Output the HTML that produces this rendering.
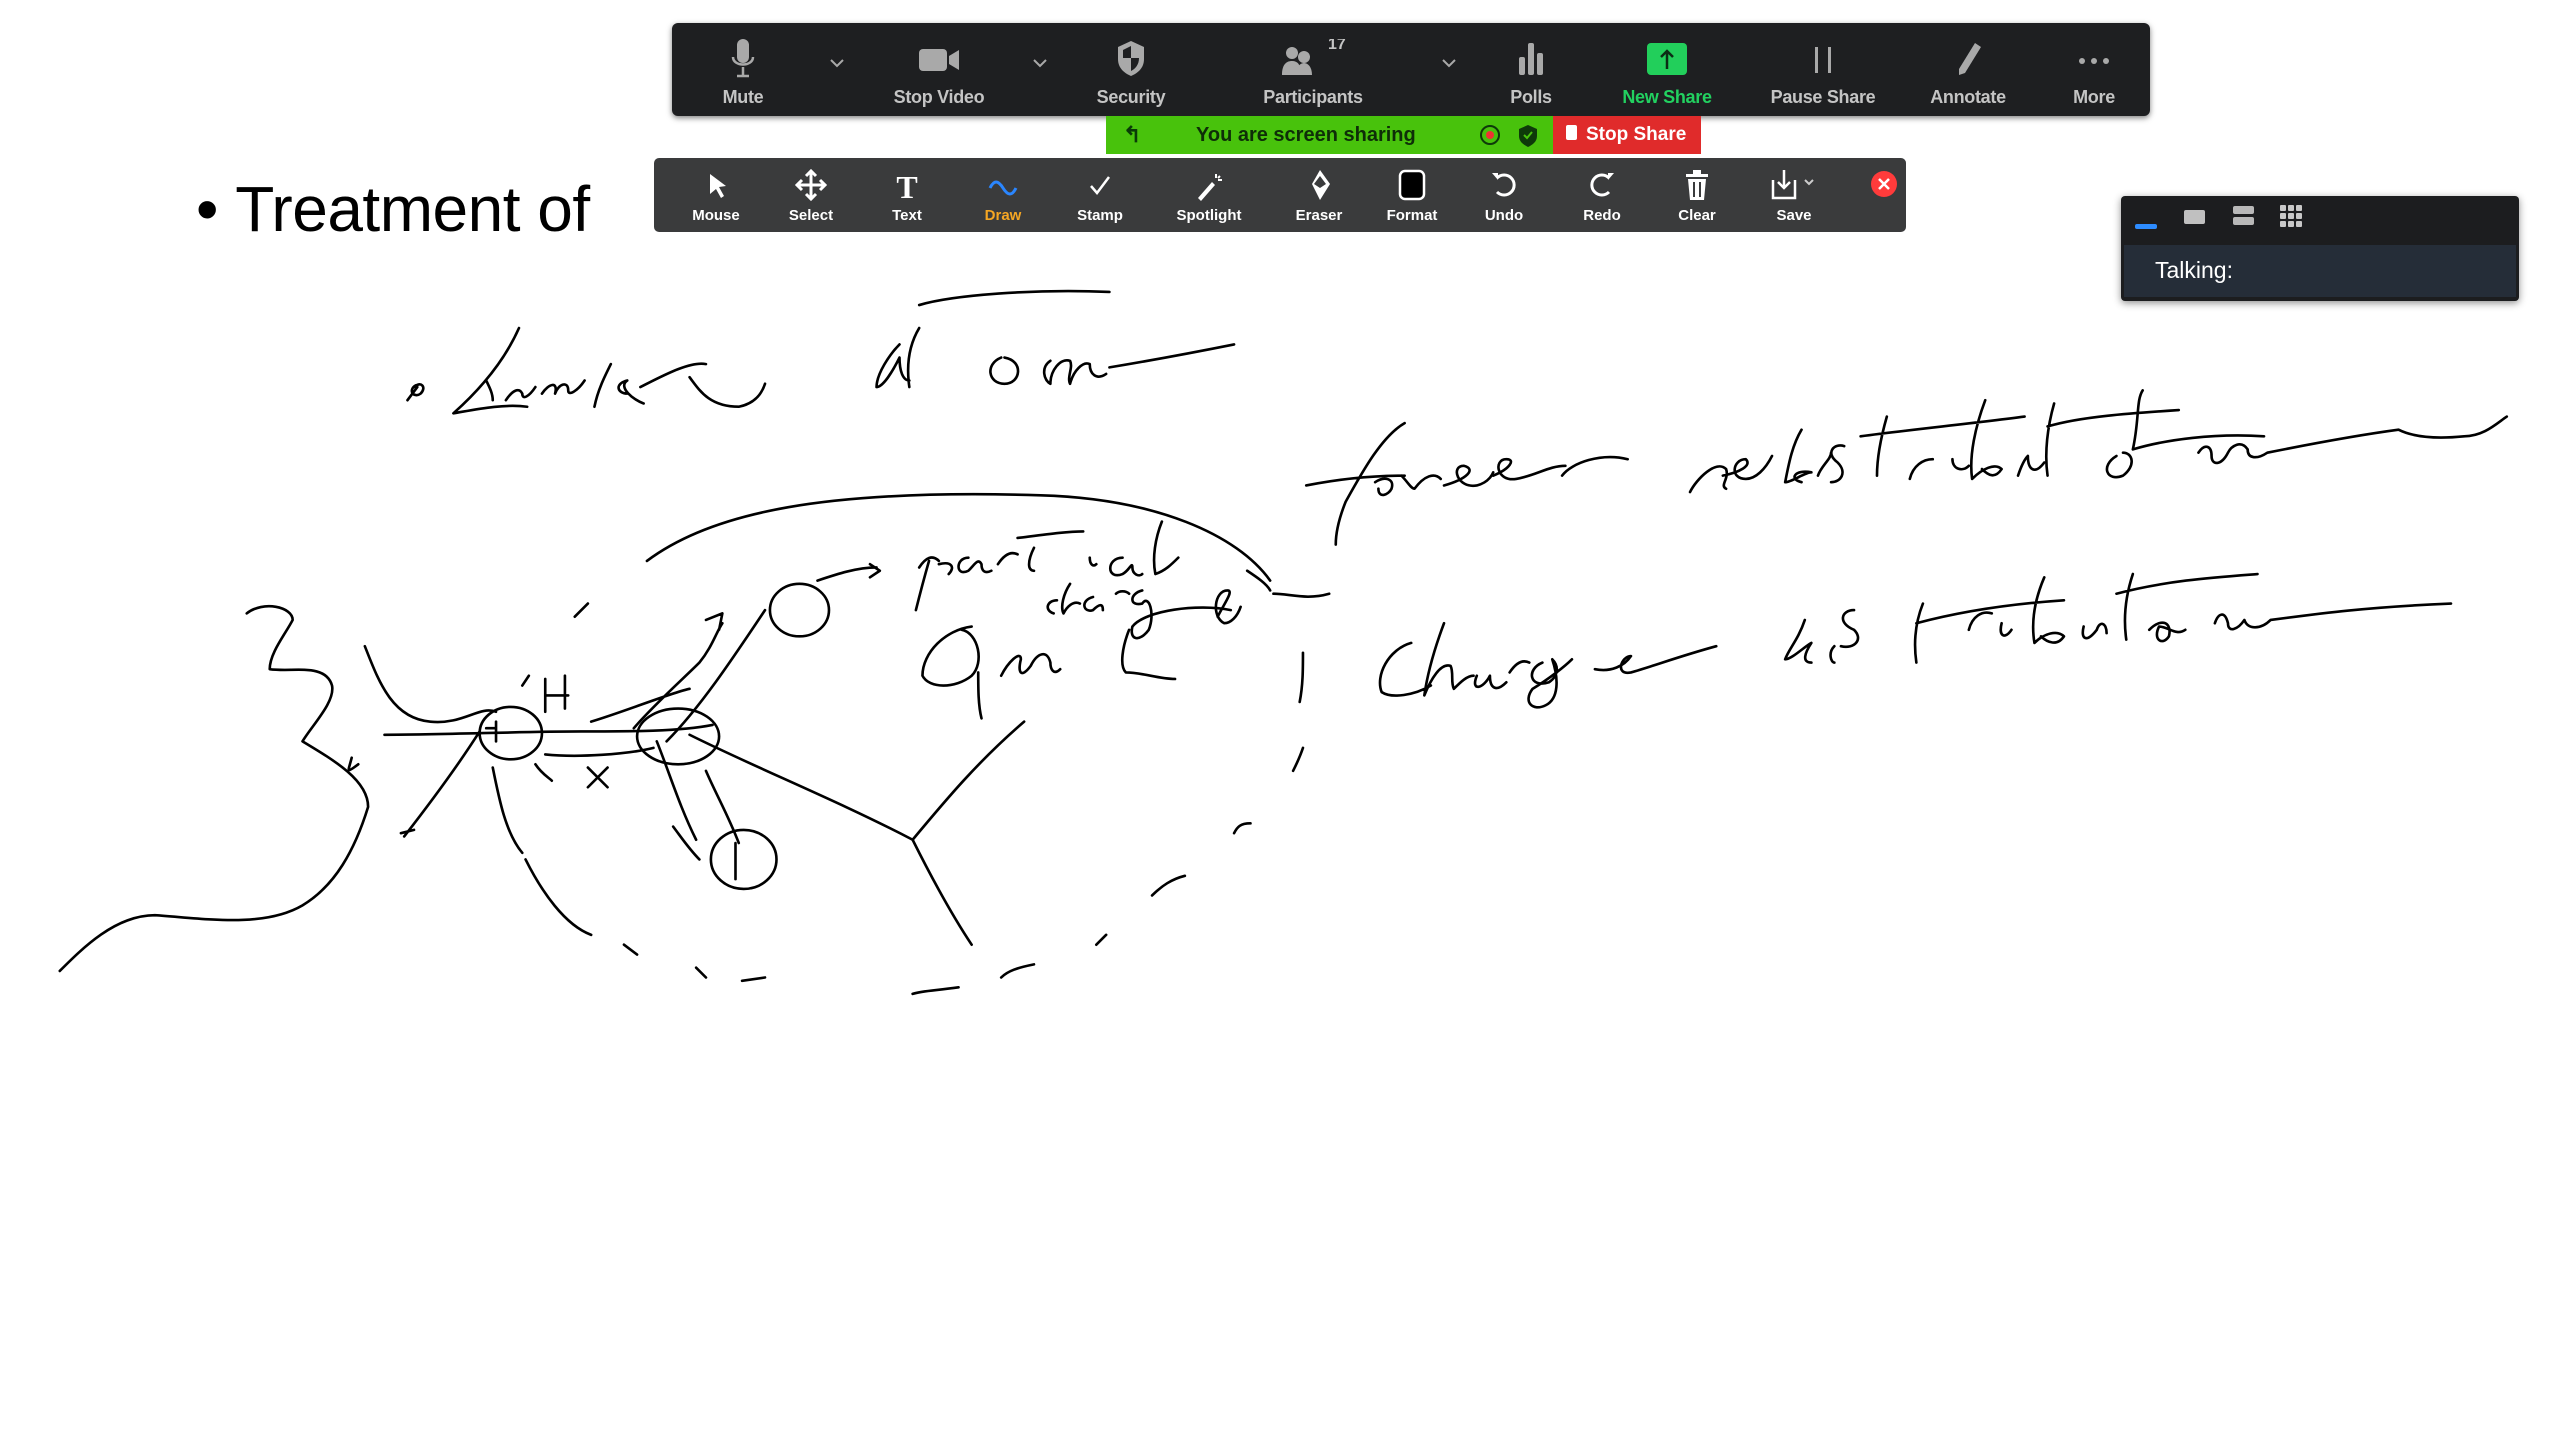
<!DOCTYPE html>
<html><head><meta charset="utf-8"><style>
html,body{margin:0;padding:0;width:2560px;height:1440px;overflow:hidden;background:#fff;font-family:"Liberation Sans",sans-serif;}
.abs{position:absolute}
#tb{left:672px;top:23px;width:1478px;height:93px;background:#1e1f21;border-radius:6px;box-shadow:0 2px 6px rgba(0,0,0,.5)}
.ti{position:absolute;top:0;height:93px;width:160px;margin-left:-80px;text-align:center}
.ti svg{position:absolute;left:50%;top:16px;transform:translateX(-50%)}
.ti span{position:absolute;left:0;right:0;top:64px;font-size:18px;font-weight:bold;color:#c4c4c4;letter-spacing:-0.3px}
.ab{position:absolute;top:0;height:74px;width:100px;margin-left:-50px;text-align:center}
.ab svg{position:absolute;left:50%;top:10px;transform:translateX(-50%)}
.ab span{position:absolute;left:0;right:0;top:49px;font-size:15px;font-weight:bold;color:#fff}
</style></head><body>
<div class="abs" style="left:196px;top:172px;font-size:64px;color:#000;white-space:nowrap;letter-spacing:-0.5px">•&nbsp;Treatment of</div>
<div class="abs" style="left:668px;top:172px;font-size:64px;color:#000;white-space:nowrap;letter-spacing:-0.5px">covalent bonds at the boundaries</div>

<svg class="abs" style="left:0;top:0" width="2560" height="1440" viewBox="0 0 1560 878" fill="none" stroke="#000" stroke-width="1.6" stroke-linecap="round" stroke-linejoin="round">
<path d="M252 236c4-4 8 0 4 4-4 3-8-2-3-5M248 244l6-8"/>
<path d="M316 200c-8 18-22 36-40 52 12-2 30-6 45-4M296 232c2 4 4 8 4 12M308 244c4-6 8-8 10-4 0 4 4 2 8-4M330 240c4-6 10-8 8 0 2-6 8-8 8-2 0 4 6 0 10-6M372 222c-4 8-8 16-10 26M382 240c-6 0-8-6 0-8-6 4 4 12 10 14M390 236c12-6 30-16 40-14M420 230c6 8 12 18 30 18 10-2 14-8 16-14"/>
<path d="M548 210c-6 6-14 18-14 26 4 0 10-10 14-18 0 8 2 14 6 14M560 200c-6 10-8 22-6 36M560 186c20-6 70-10 116-8M610 218c-10 4-8 16 2 16 10 0 12-14 0-16M640 220c-6 4-4 12 0 14 0-8 6-16 12-14 2 4-2 10 0 14 2-8 8-14 12-12 0 6 4 10 10 6M676 224c24-4 56-10 76-14"/>
<path d="M856 258c-14 8-26 30-36 48-4 10-6 18-6 26M796 296c20-4 40-6 60-6M838 294c6-4 12-2 10 4-2 4-8 6-8 0M854 290c4 4 6 8 8 8 6-8 12-10 16-6M880 296c14-4 20-10 12-12-8 0-4 14 8 12 8-2 10-8 10-8M910 290c10-4 14-10 8-10-8 0-6 14 6 12 12-2 20-8 30-8M952 290c6-8 24-14 40-10M1030 300c4-8 16-20 22-14 2 6-4 10 0 12M1050 290c10-2 18-6 14-10-8 0-10 12 0 12 6 0 12-6 16-14M1098 262c-6 10-8 22-10 32 4 0 12-6 16-6-10-2-14 4-6 6M1108 290c2-6 8-10 8-14M1124 272c-6-2-12 4-4 10 6 6 2 12-4 12M1150 254c-4 14-6 26-6 36M1134 266c30-4 70-8 100-12M1164 292c2-8 8-12 14-12M1190 280c0 6 6 8 10 4M1210 244c-6 16-10 34-8 48 6-6 14-10 18-6-4 6-8 4-12 0M1230 290c2-6 4-10 6-12 0 8 4 12 10 4M1252 246c-4 14-6 30-4 44M1248 260c20-6 50-8 80-10M1290 278c-10 6-6 16 4 12 8-6 6-14 0-14M1340 276c4-6 8-4 8 2 0 6 6 6 10-2 2-4 8-8 12-2 0 6 6 6 12 2 20-4 50-10 80-14 8 4 20 6 40 4 12 0 20-8 26-12"/>
<path d="M1300 274c4-18 2-30 6-36M1300 274c20-6 50-10 80-8"/>
<path d="M860 392c-14 4-22 20-18 30 6 4 20 2 30-4M880 380c-6 16-10 30-12 44 4-10 10-20 16-18 2 4 0 10 2 14 4-4 8-8 12-8M900 412c-4 10 4 8 8 0 0 8 4 10 10 4M920 410c4-6 8-8 12-6M940 404c-10 4-8 16 4 12 6-4 6-10 2-14 4 12 4 24-4 28-8 4-14-2-8-10 10-6 20-14 24-18M972 408c10 2 18-2 22-8-6 0-10 12 0 10 14-4 30-10 52-16M1100 378c-4 12-10 18-12 24 4 0 12-8 16-10-4 6-6 12 0 12M1118 394c-4 4-2 10 0 10M1130 372c-8 0-10 8 0 12 6 6 0 12-8 10M1172 368c-4 10-6 22-4 36M1168 380c30-8 60-12 90-14M1200 384c2-8 8-12 14-10M1220 380c-2 8 2 10 6 4M1246 352c-6 14-8 28-6 40 6-6 14-8 18-4-4 6-10 4-14 0M1270 382c-2 8 2 10 8 2 2-6 6-4 6 2M1300 350c-4 12-6 26-4 40M1290 362c30-8 60-10 86-12M1310 384c8-8 14-4 12 4-4 6-10 2-6-6 6 0 10 6 16 2M1350 380c2-6 6-8 8 0 0 6 6 4 10-2 2 6 10 6 16 0 30-4 60-8 110-10"/>
<path d="M150 374c10-8 28-4 28 4-4 8-14 20-14 30 14 2 34-4 38 10 2 10-12 24-18 34 20 12 40 24 40 40-8 26-20 48-40 60-24 14-60 8-90 6-24 0-44 20-58 34M214 462c-2 8-4 10 4 4"/>
<path d="M222 394c8 20 16 44 40 46 20 2 30-10 40-6"/>
<path d="M234 448c40 0 80-2 120-2 30 0 60 0 80-4"/>
<ellipse cx="311" cy="447" rx="19" ry="16"/>
<path d="M302 440l0 12M296 444l6 0"/>
<path d="M332 414v20M344 412v20M332 424h14"/>
<ellipse cx="413" cy="449" rx="25" ry="17"/>
<path d="M386 444c12-14 30-30 40-40 8-10 10-18 14-24M430 378l10-4-2 10M292 446c-14 22-32 46-46 64M244 508l8-2M326 466c4 6 8 8 10 10M358 468l12 12M370 468l-12 12M332 460c20 2 50 0 66-4M360 440c20-6 50-18 60-20"/>
<ellipse cx="487" cy="372" rx="18" ry="16"/>
<path d="M466 372c-20 30-40 60-60 80M498 354c12-4 24-8 36-8M530 344l6 4-6 4"/>
<path d="M400 452c8 20 14 40 24 60M410 504c6 8 10 14 16 20M430 470c6 14 14 28 20 44"/>
<ellipse cx="453" cy="524" rx="20" ry="18"/>
<path d="M448 514v22"/>
<path d="M420 448c40 20 90 40 136 64 20-24 40-48 68-72M556 512c10 20 24 46 36 64"/>
<path d="M394 342c40-30 110-44 240-40 70 2 120 24 140 52M350 376l8-8M318 418l4-6M794 398c0 10 0 20-2 30M794 456c-2 6-4 10-6 14M752 508c2-4 4-6 10-6M702 546c6-6 12-10 20-12M668 576l6-6M610 596c4-4 10-6 20-8M556 606c6-2 14-2 28-4M452 598l14-2M424 590l6 6M380 576l8 6M320 524c10 20 24 40 40 46M300 468c4 20 8 40 18 52"/>
<path d="M560 346c4-6 8-8 12-4M566 342c-4 14-6 22-8 30M572 344c8-2 10 2 6 6M590 340c-8 0-8 12 0 8 4-4 6-8 8-4 0 4 2 6 6 4M608 344c4-6 8-8 12-6M630 334c-4 8-4 14 0 14M620 328c16-2 30-4 40-4M664 340c0 4 2 6 4 4M684 340c-10 0-10 14 0 10 4-2 6-8 6-4 0 4 4 6 6 4M708 318c-4 10-6 22-4 32 6-2 10-6 14-10"/>
<path d="M644 366c-6 0-8 6-2 8M652 356c-4 6-6 14-4 18 2-4 6-8 10-6M666 364c-8 2-6 10 0 8 4-4 6-4 6 0M680 362c2-2 6-2 8 0M696 360c-8 2-8 10 0 8 4-6 8 6 4 16-6 8-12 6-10-2 8-10 40-14 60-10M760 348c6 4 12 8 14 12M776 362c10 0 20 4 34 0"/>
<path d="M592 382c-16 2-30 16-30 30 4 8 20 8 30 0 8-8 4-26-6-28M596 410c0 10 0 20 2 28M610 412c4-8 12-16 12-10-2 8 0 12 6 4 4-8 10-10 12-2 0 4 2 8 6 4M688 384c-4 10-6 22-2 26 10 0 20 4 30 4"/>
<path d="M742 376c4-8 10-16 6-16-8 0-10 16-2 20 4 0 8-4 10-10"/>
</svg>

<div id="tb" class="abs">
  <div class="ti" style="left:71px"><svg width="24" height="40" viewBox="0 0 24 40"><rect x="6" y="0" width="12" height="24" rx="6" fill="#a9a9a9"/><path d="M2 18c0 10 20 10 20 0M12 28v8M6 37h12" stroke="#a9a9a9" stroke-width="2.5" fill="none"/></svg><span>Mute</span></div>
  <div class="ti" style="left:165px"><svg width="20" height="40"><path d="M4 21l6 6 6-6" stroke="#a9a9a9" stroke-width="2" fill="none"/></svg></div>
  <div class="ti" style="left:267px"><svg width="44" height="40"><rect x="2" y="10" width="28" height="22" rx="4" fill="#a9a9a9"/><path d="M32 17l10-6v20l-10-6z" fill="#a9a9a9"/></svg><span>Stop Video</span></div>
  <div class="ti" style="left:368px"><svg width="20" height="40"><path d="M4 21l6 6 6-6" stroke="#a9a9a9" stroke-width="2" fill="none"/></svg></div>
  <div class="ti" style="left:459px"><svg width="32" height="40"><path d="M16 2l13 6v12c0 9-6 14-13 17C9 34 3 29 3 20V8z" fill="#a9a9a9"/><path d="M16 7v12H8V11zM16 19h8c0 7-4 11-8 13z" fill="#1e1f21"/></svg><span>Security</span></div>
  <div class="ti" style="left:641px"><svg width="70" height="40"><circle cx="14" cy="14" r="6" fill="#a9a9a9"/><circle cx="26" cy="18" r="6" fill="#a9a9a9"/><path d="M4 36c0-10 4-14 10-14s8 4 8 8v6z M18 36c0-8 4-12 8-12s8 4 8 12z" fill="#a9a9a9"/><text x="50" y="10" font-size="16" font-weight="bold" fill="#c4c4c4" font-family="Liberation Sans">17</text></svg><span>Participants</span></div>
  <div class="ti" style="left:777px"><svg width="20" height="40"><path d="M4 21l6 6 6-6" stroke="#a9a9a9" stroke-width="2" fill="none"/></svg></div>
  <div class="ti" style="left:859px"><svg width="32" height="40"><rect x="4" y="18" width="6" height="18" rx="2" fill="#a9a9a9"/><rect x="13" y="4" width="6" height="32" rx="2" fill="#a9a9a9"/><rect x="22" y="14" width="6" height="22" rx="2" fill="#a9a9a9"/></svg><span>Polls</span></div>
  <div class="ti" style="left:995px"><svg width="44" height="40"><rect x="2" y="4" width="40" height="32" rx="4" fill="#22cf5b"/><path d="M22 30V12M16 18l6-6 6 6" stroke="#0b2d15" stroke-width="2.5" fill="none"/></svg><span style="color:#22d160">New Share</span></div>
  <div class="ti" style="left:1151px"><svg width="30" height="40"><rect x="7" y="8" width="3" height="26" fill="#a9a9a9"/><rect x="20" y="8" width="3" height="26" fill="#a9a9a9"/></svg><span>Pause Share</span></div>
  <div class="ti" style="left:1296px"><svg width="34" height="40"><path d="M24 4l6 4-16 26-6 2 0-6z" fill="#a9a9a9"/></svg><span>Annotate</span></div>
  <div class="ti" style="left:1422px"><svg width="40" height="40"><circle cx="8" cy="22" r="3" fill="#a9a9a9"/><circle cx="20" cy="22" r="3" fill="#a9a9a9"/><circle cx="32" cy="22" r="3" fill="#a9a9a9"/></svg><span>More</span></div>
</div>

<div class="abs" style="left:1106px;top:116px;width:447px;height:38px;background:#48c20c"></div>
<div class="abs" style="left:1123px;top:122px;font-size:22px;color:#0a3a08;font-weight:bold">↰</div>
<div class="abs" style="left:1196px;top:124px;font-size:20px;color:#0e2e08;font-weight:bold">You are screen sharing</div>
<svg class="abs" style="left:1476px;top:122px" width="70" height="26"><circle cx="14" cy="13" r="9" stroke="#0e3a0a" stroke-width="2" fill="none"/><circle cx="14" cy="13" r="4" fill="#e33"/><path d="M52 3l9 4v7c0 6-5 9-9 11-4-2-9-5-9-11V7z" fill="#0e3a0a"/><path d="M48 13l3 3 5-6" stroke="#48c20c" stroke-width="2" fill="none"/></svg>
<div class="abs" style="left:1553px;top:116px;width:148px;height:38px;background:#e02b2b"></div>
<div class="abs" style="left:1566px;top:125px;width:11px;height:15px;background:#fff;border-radius:2px"></div>
<div class="abs" style="left:1586px;top:124px;font-size:19px;color:#fff;font-weight:bold">Stop Share</div>

<div class="abs" style="left:654px;top:158px;width:1252px;height:74px;background:#3a3b3c;border-radius:5px">
  <div class="ab" style="left:62px"><svg width="30" height="34"><path d="M9 6l16 12-7 1 5 9-3 2-5-9-6 5z" fill="#fff"/></svg><span>Mouse</span></div>
  <div class="ab" style="left:157px"><svg width="34" height="34"><path d="M17 3v28M3 17h28M12 8l5-5 5 5M12 26l5 5 5-5M8 12l-5 5 5 5M26 12l5 5-5 5" stroke="#fff" stroke-width="3" fill="none"/></svg><span>Select</span></div>
  <div class="ab" style="left:253px"><svg width="30" height="34"><text x="15" y="30" font-size="32" text-anchor="middle" fill="#fff" font-family="Liberation Serif" font-weight="bold">T</text></svg><span>Text</span></div>
  <div class="ab" style="left:349px"><svg width="34" height="34"><path d="M4 20c4-8 8-8 13 0s9 8 13 0" stroke="#2a86ff" stroke-width="3" fill="none"/></svg><span style="color:#f5a623">Draw</span></div>
  <div class="ab" style="left:446px"><svg width="30" height="34"><path d="M6 18l6 7 12-16" stroke="#fff" stroke-width="2.5" fill="none"/></svg><span>Stamp</span></div>
  <div class="ab" style="left:555px"><svg width="34" height="34"><path d="M6 30l14-16 3 3-14 16z" fill="#fff"/><path d="M24 6v4M30 12h-4M28 8l-2 2" stroke="#fff" stroke-width="2"/></svg><span>Spotlight</span></div>
  <div class="ab" style="left:665px"><svg width="30" height="34"><path d="M16 2l10 14-10 16-8-16z" fill="#fff"/><path d="M16 20l-6-4 6-8 6 8z" fill="#3a3b3c"/></svg><span>Eraser</span></div>
  <div class="ab" style="left:758px"><svg width="34" height="34"><rect x="5" y="3" width="24" height="28" rx="5" fill="#000" stroke="#fff" stroke-width="2.5"/></svg><span>Format</span></div>
  <div class="ab" style="left:850px"><svg width="34" height="34"><path d="M10 10a10 10 0 1 1 0 14" stroke="#fff" stroke-width="3" fill="none"/><path d="M5 5l6 0 0 7z" fill="#fff"/></svg><span>Undo</span></div>
  <div class="ab" style="left:948px"><svg width="34" height="34"><path d="M24 10a10 10 0 1 0 0 14" stroke="#fff" stroke-width="3" fill="none"/><path d="M29 5l-6 0 0 7z" fill="#fff"/></svg><span>Redo</span></div>
  <div class="ab" style="left:1043px"><svg width="30" height="34"><rect x="4" y="6" width="22" height="3" fill="#fff"/><rect x="11" y="2" width="8" height="4" fill="#fff"/><path d="M6 11h18l-2 21H8z" fill="#fff"/><path d="M12 14v15M18 14v15" stroke="#3a3b3c" stroke-width="2"/></svg><span>Clear</span></div>
  <div class="ab" style="left:1140px"><svg width="50" height="34"><path d="M4 12v18h22V12" stroke="#fff" stroke-width="2.5" fill="none"/><path d="M15 2v18M9 14l6 6 6-6" stroke="#fff" stroke-width="2.5" fill="none"/><path d="M36 12l4 4 4-4" stroke="#ccc" stroke-width="2" fill="none"/></svg><span>Save</span></div>
  <div class="ab" style="left:1230px"><svg width="30" height="34"><circle cx="15" cy="16" r="13" fill="#ff3b3b"/><path d="M10 11l10 10M20 11l-10 10" stroke="#fff" stroke-width="2.5"/></svg></div>
</div>

<div class="abs" style="left:2121px;top:196px;width:398px;height:105px;background:#1c1d1f;border-radius:4px;box-shadow:0 2px 8px rgba(0,0,0,.45);overflow:hidden">
  <div class="abs" style="left:14px;top:28px;width:22px;height:5px;background:#2d8cff;border-radius:2px"></div>
  <div class="abs" style="left:63px;top:14px;width:21px;height:14px;background:#c0c0c0;border-radius:2px"></div>
  <div class="abs" style="left:112px;top:10px;width:21px;height:8px;background:#b8b8b8;border-radius:2px"></div>
  <div class="abs" style="left:112px;top:21px;width:21px;height:8px;background:#b8b8b8;border-radius:2px"></div>
  <svg class="abs" style="left:159px;top:9px" width="26" height="26"><g fill="#c8c8c8"><rect x="0" y="0" width="6" height="6" rx="1"/><rect x="8" y="0" width="6" height="6" rx="1"/><rect x="16" y="0" width="6" height="6" rx="1"/><rect x="0" y="8" width="6" height="6" rx="1"/><rect x="8" y="8" width="6" height="6" rx="1"/><rect x="16" y="8" width="6" height="6" rx="1"/><rect x="0" y="16" width="6" height="6" rx="1"/><rect x="8" y="16" width="6" height="6" rx="1"/><rect x="16" y="16" width="6" height="6" rx="1"/></g></svg>
  <div class="abs" style="left:3px;top:49px;width:392px;height:52px;background:#252d38"></div>
  <div class="abs" style="left:34px;top:61px;font-size:23px;color:#fff">Talking:</div>
</div>
</body></html>
